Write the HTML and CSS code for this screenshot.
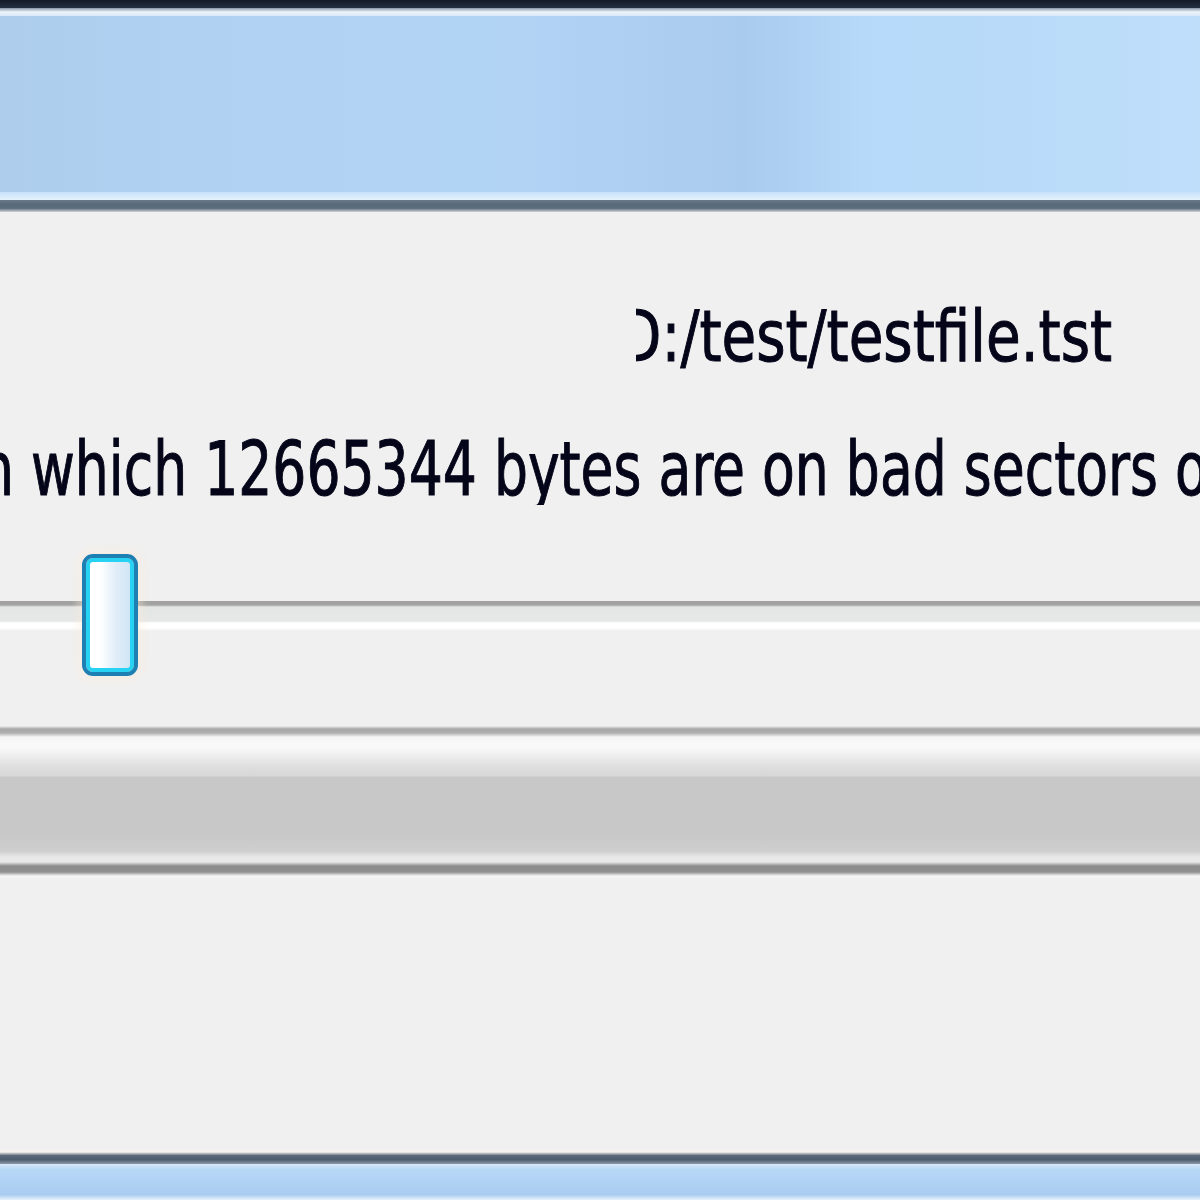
FILE: index.html
```html
<!DOCTYPE html>
<html>
<head>
<meta charset="utf-8">
<link rel="stylesheet" href="styles.css">
</head>
<body>
<div class="window">
  <div class="titlebar">
    <div class="tb-dark"></div>
    <div class="tb-hl"></div>
    <div class="tb-glass"></div>
    <div class="tb-hl2"></div>
    <div class="tb-edge"></div>
  </div>
  <div class="content">
    <div class="path-row"><div class="path-clip"><span class="path">D:/test/testfile.tst</span></div></div>
    <div class="info-row"><span class="info">n which 12665344 bytes are on bad sectors of</span></div>
    <div class="slider">
      <div class="track"></div>
      <div class="thumb"></div>
    </div>
    <div class="progress"></div>
  </div>
  <div class="bottombar">
    <div class="bb-edge"></div>
    <div class="bb-glass"></div>
  </div>
</div>
</body>
</html>
```
FILE: styles.css
```css
html, body {
  margin: 0;
  padding: 0;
}
body {
  width: 1200px;
  height: 1200px;
  overflow: hidden;
  background: #f0f0f0;
  font-family: "DejaVu Sans Condensed", "DejaVu Sans", sans-serif;
  color: #05051a;
}
.window {
  display: flex;
  flex-direction: column;
  height: 1200px;
}
.titlebar {
  display: flex;
  flex-direction: column;
  flex: none;
}
.tb-dark {
  height: 8px;
  background: linear-gradient(#121a26, #243040);
}
.tb-hl {
  height: 8px;
  background: linear-gradient(#8898a8, #eef4fa 50%, #d8e8f6);
}
.tb-glass {
  height: 176px;
  background: linear-gradient(90deg, #aecdec 0%, #b0d1f2 15%, #b2d4f4 40%, #aecff2 52%, #a9cbee 62%, #b6d9f9 72%, #b9dbf9 85%, #bfdefa 100%);
}
.tb-hl2 {
  height: 8px;
  background: linear-gradient(#c8e2fa, #e4f1fc);
}
.tb-edge {
  height: 12px;
  background: linear-gradient(#6a7888, #56687a 40%, #5e6e7e 70%, #d0d4d8);
}
.content {
  flex: 1;
  display: flex;
  flex-direction: column;
}
.path-row {
  height: 160px;
  display: flex;
  align-items: flex-end;
  flex: none;
}
.path-clip {
  margin-left: 636px;
  overflow: hidden;
  flex: 1;
  display: flex;
  align-items: flex-end;
}
.path {
  display: inline-block;
  font-size: 72px;
  line-height: 72px;
  white-space: nowrap;
  margin-left: -18px;
  transform: scaleX(0.87);
  transform-origin: left;
  -webkit-text-stroke: 1px #05051a;
}
.info-row {
  height: 133px;
  overflow: hidden;
  display: flex;
  align-items: flex-end;
  white-space: nowrap;
  flex: none;
}
.info {
  display: inline-block;
  font-size: 74px;
  line-height: 72px;
  margin-left: -20px;
  transform: scaleX(0.805);
  transform-origin: left;
  -webkit-text-stroke: 1px #05051a;
}
.slider {
  position: relative;
  height: 218px;
  flex: none;
}
.track {
  position: absolute;
  left: 0;
  right: 0;
  top: 96px;
  height: 30px;
  background: linear-gradient(#a0a0a0 0, #a4a4a4 4px, #e4e6e6 6px, #e6e8e8 20px, #ffffff 22px, #ffffff 27px, #f0f0f0 30px);
}
.thumb {
  position: absolute;
  left: 82px;
  top: 49px;
  width: 56px;
  height: 122px;
  box-sizing: border-box;
  border: 4px solid #1e7fb2;
  border-radius: 11px;
  box-shadow: inset 0 0 0 4px #28d2f2, 0 0 8px 4px rgba(255, 236, 214, 0.45);
  background: linear-gradient(90deg, #ffffff 30%, #e2eef8 60%, #cce4f4);
}
.progress {
  height: 156px;
  flex: none;
  background: linear-gradient(#f0f0f0 0, #f0f0f0 3px, #a8a8a8 6px, #b0b0b0 10px, #f6f6f6 14px, #fafafa 24px, #e6e6e6 38px, #dcdcdc 46px, #d8d8d8 53px, #c8c8c8 54px, #c8c8c8 110px, #cecece 128px, #e8e8e8 134px, #e8e8e8 139px, #8c8c8c 143px, #909090 149px, #f6f6f6 153px, #f0f0f0 156px);
}
.bottombar {
  flex: none;
  display: flex;
  flex-direction: column;
  margin-top: auto;
}
.bb-edge {
  height: 14px;
  background: linear-gradient(#f8f4f0, #f4f0ec 15%, #5a6878 40%, #4e5e70 70%, #8a9aaa);
}
.bb-glass {
  height: 36px;
  background: linear-gradient(#d8e8f8 0, #b8d8f8 15%, #b0d2f4 50%, #a8ccf0 85%, #e8f2fc 100%);
}
```
